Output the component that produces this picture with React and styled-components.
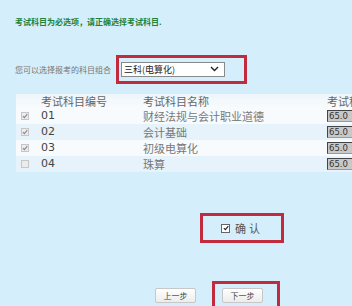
import styled, { createGlobalStyle } from 'styled-components'

const GlobalStyle = createGlobalStyle`
  body {
    margin: 0;
    background: #d5eefb;
    font-family: "DejaVu Sans", "Noto Sans CJK SC", sans-serif;
  }
`

const Page = styled.div`
  width: 352px;
  height: 306px;
  overflow: hidden;
  padding: 17px 0 0 15px;
  box-sizing: border-box;
`

const Notice = styled.div`
  font-family: "Noto Sans CJK SC", sans-serif;
  font-size: 8px;
  line-height: 10px;
  font-weight: bold;
  color: #21823a;
`

const ComboRow = styled.div`
  display: flex;
  align-items: center;
  gap: 5px;
  margin-top: 28px;
`

const Label = styled.span`
  font-family: "Noto Sans CJK SC", sans-serif;
  font-size: 8px;
  color: #777;
`

const Highlight = styled.div`
  box-sizing: border-box;
  width: ${(p) => p.$w}px;
  height: ${(p) => p.$h}px;
  border: 3px solid #c22b3d;
  display: flex;
  align-items: ${(p) => p.$align || 'center'};
  justify-content: ${(p) => p.$justify || 'flex-start'};
  padding: ${(p) => p.$pad || '0'};
`

const Select = styled.div`
  box-sizing: border-box;
  width: 104px;
  height: 15px;
  margin-top: -1px;
  border: 1px solid #8a8a8a;
  background: #fff;
  display: flex;
  align-items: center;
  justify-content: space-between;
  padding: 0 5px 0 2px;
  font-family: "Noto Sans CJK SC", sans-serif;
  font-size: 9px;
  color: #222;
`

const Table = styled.div`
  width: 360px;
  margin: 10px 0 0 1px;
`

const Row = styled.div`
  display: grid;
  grid-template-columns: 25px 102px 184px 1fr;
  grid-template-rows: ${(p) => (p.$head ? 14 : 16)}px;
  align-items: center;
  height: ${(p) => (p.$head ? 14 : 16)}px;
  overflow: hidden;
  white-space: nowrap;
  line-height: 14px;
  background: ${(p) => p.$bg};
  font-size: 11px;
  color: ${(p) => (p.$head ? '#666' : '#555')};
  font-family: ${(p) => (p.$head ? '"Noto Sans CJK SC", sans-serif' : 'inherit')};
`

const Name = styled.span`
  font-family: "Noto Sans CJK SC", sans-serif;
  color: #777;
`

const Code = styled.span`
  color: #444;
`

const Box = styled.span`
  box-sizing: border-box;
  width: 8px;
  height: 8px;
  margin-left: 5px;
  border: 1px solid #c6c6c6;
  background: #ececec;
  display: flex;
  align-items: center;
  justify-content: center;
`

const Score = styled.div`
  box-sizing: border-box;
  height: 12px;
  border: 1px solid #9a9a9a;
  border-top-color: #444;
  border-left-color: #444;
  background: #c8c8c8;
  font-size: 8.5px;
  line-height: 10px;
  color: #333;
  padding-left: 1px;
`

const Confirm = styled(Highlight)`
  margin: 41px 0 0 185px;
  gap: 5px;
`

const ConfirmBox = styled.span`
  box-sizing: border-box;
  width: 9px;
  height: 9px;
  border: 1px solid #666;
  background: #fff;
  display: flex;
  align-items: center;
  justify-content: center;
`

const ConfirmText = styled.span`
  font-family: "Noto Sans CJK SC", sans-serif;
  font-size: 11px;
  letter-spacing: 3px;
  color: #555;
`

const Buttons = styled.div`
  display: flex;
  align-items: flex-start;
  margin: 38px 0 0 140px;
  gap: 16px;
`

const Button = styled.div`
  box-sizing: border-box;
  width: 41px;
  height: 15px;
  margin-top: ${(p) => p.$top || 0}px;
  border: 1px solid #c7c7c7;
  border-radius: 2px;
  background: linear-gradient(#ffffff, #ececec);
  display: flex;
  align-items: center;
  justify-content: center;
  font-family: "Noto Sans CJK SC", sans-serif;
  font-size: 8px;
  color: #444;
`

const Check = ({ color = '#888' }) => (
  <svg width="6" height="6" viewBox="0 0 6 6">
    <path d="M0.8 3.1 L2.4 4.7 L5.3 1.2" fill="none" stroke={color} strokeWidth="1.1" />
  </svg>
)

const Chevron = () => (
  <svg width="9" height="6" viewBox="0 0 9 6">
    <path d="M1 1 L4.5 4.5 L8 1" fill="none" stroke="#222" strokeWidth="1.4" />
  </svg>
)

const subjects = [
  { code: '01', name: '财经法规与会计职业道德', checked: true, bg: '#f7fbfe' },
  { code: '02', name: '会计基础', checked: true, bg: '#e6f3fb' },
  { code: '03', name: '初级电算化', checked: true, bg: '#f7fbfe' },
  { code: '04', name: '珠算', checked: false, bg: '#e6f3fb' },
]

export default function App() {
  return (
    <Page>
      <GlobalStyle />
      <Notice>考试科目为必选项，请正确选择考试科目.</Notice>
      <ComboRow>
        <Label>您可以选择报考的科目组合</Label>
        <Highlight $w={131} $h={29} $pad="0 0 0 2px">
          <Select>
            三科(电算化)
            <Chevron />
          </Select>
        </Highlight>
      </ComboRow>
      <Table>
        <Row $head $bg="linear-gradient(#eef6fb, #f8fbfd)">
          <span />
          <span>考试科目编号</span>
          <span>考试科目名称</span>
          <span>考试科目类型</span>
        </Row>
        {subjects.map((s) => (
          <Row key={s.code} $bg={s.bg}>
            <Box>{s.checked && <Check />}</Box>
            <Code>{s.code}</Code>
            <Name>{s.name}</Name>
            <Score>65.0</Score>
          </Row>
        ))}
      </Table>
      <Confirm $w={84} $h={30} $justify="center">
        <ConfirmBox>
          <Check color="#222" />
        </ConfirmBox>
        <ConfirmText>确认</ConfirmText>
      </Confirm>
      <Buttons>
        <Button $top={7}>上一步</Button>
        <Highlight $w={68} $h={32} $align="flex-start" $pad="4px 0 0 7px">
          <Button>下一步</Button>
        </Highlight>
      </Buttons>
    </Page>
  )
}
